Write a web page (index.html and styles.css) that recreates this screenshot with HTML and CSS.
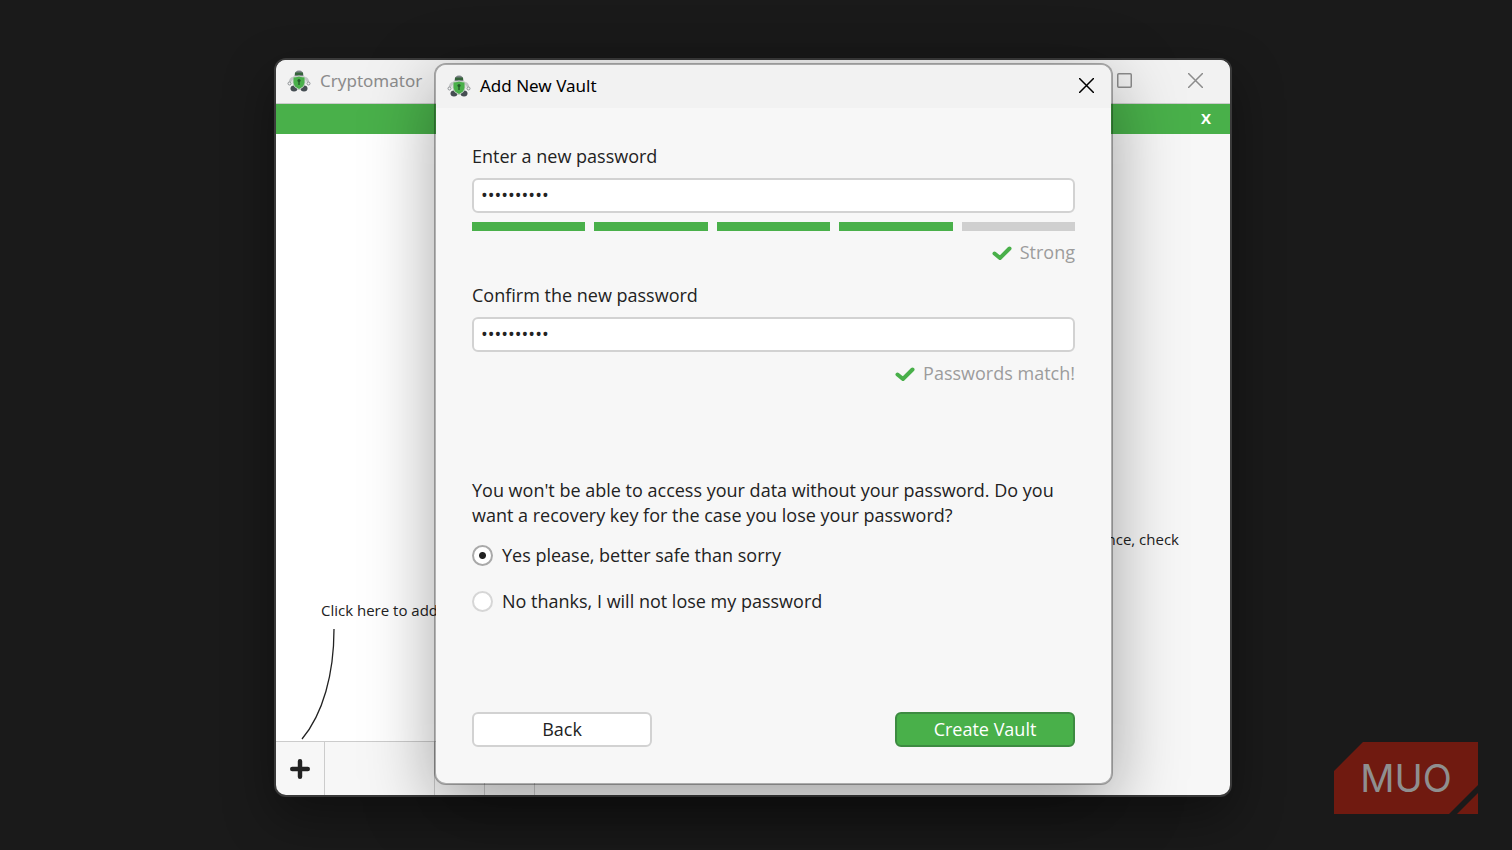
FILE: index.html
```html
<!DOCTYPE html>
<html lang="en">
<head>
    <meta charset="UTF-8">
    <meta name="viewport" content="width=device-width, initial-scale=1.0">
    <title>Cryptomator</title>
    <link rel="stylesheet" href="styles.css">
</head>
<body>
    <svg width="0" height="0" class="defs">
        <symbol id="robot" viewBox="0 0 24 22">
            <path d="M6 8 Q3.5 9 3 12 M18 8 Q20.500 9 21 12" fill="none" stroke="#c2c5c6" stroke-width="2.5"/>
            <circle cx="2.500" cy="13.500" r="1.500" fill="#f2f2f2" stroke="#8b9092" stroke-width="1"/>
            <circle cx="21.500" cy="13.500" r="1.500" fill="#f2f2f2" stroke="#8b9092" stroke-width="1"/>
            <ellipse cx="7" cy="18.500" rx="3.500" ry="3" fill="#464e53"/>
            <ellipse cx="17" cy="18.500" rx="3.500" ry="3" fill="#464e53"/>
            <path d="M7.500 6 Q7.500 0.500 12 0.500 Q16.500 0.500 16.500 6z" fill="#7a8285"/>
            <rect x="8" y="2.500" width="8" height="2.500" fill="#35633a"/>
            <path d="M6 7 Q9 7 12 6 Q15 7 18 7 V13 Q18 17 12 19.500 Q6 17 6 13z" fill="#49b04a" stroke="#c6cac8" stroke-width="1"/>
            <circle cx="12" cy="10.500" r="1.600" fill="#245a2a"/>
            <rect x="11.300" y="11" width="1.400" height="4" fill="#245a2a"/>
        </symbol>
        <symbol id="check" viewBox="0 0 20 14">
            <path d="M2.5 7.5 L8 12 L17.5 2.5" fill="none" stroke="#49b04a" stroke-width="4" stroke-linecap="round"/>
        </symbol>
        <symbol id="cross" viewBox="0 0 15 15">
            <path d="M0 0 L15 15 M15 0 L0 15" fill="none" stroke="currentColor" stroke-width="1.5"/>
        </symbol>
    </svg>

    <div class="window main">
        <div class="titlebar">
            <svg class="robot"><use href="#robot"/></svg>
            <span class="title">Cryptomator</span>
            <button class="winbtn" aria-label="Maximize">
                <svg viewBox="0 0 15 15"><rect x="0.75" y="0.75" width="13.5" height="13.5" rx="1" fill="none" stroke="currentColor" stroke-width="1.5"/></svg>
            </button>
            <button class="winbtn" aria-label="Close"><svg><use href="#cross"/></svg></button>
        </div>
        <div class="banner">
            <button aria-label="Dismiss">X</button>
        </div>
        <div class="content">
            <div class="sidebar">
                <div class="vaults">
                    <p>Click here to add</p>
                    <svg class="curve" viewBox="0 0 34 112">
                        <path d="M33 1 C33 46 22 86 1 111" fill="none" stroke="#222" stroke-width="1.3"/>
                    </svg>
                </div>
                <div class="toolbar">
                    <button class="add" aria-label="Add vault">
                        <svg viewBox="0 0 18 18"><path d="M9 2 V16 M2 9 H16" stroke="#222" stroke-width="4" stroke-linecap="round"/></svg>
                    </button>
                    <span class="cell"></span>
                    <span class="cell"></span>
                </div>
            </div>
            <div class="detail">
                <p>nce, check</p>
            </div>
        </div>
    </div>

    <div class="window dialog">
        <div class="titlebar">
            <svg class="robot"><use href="#robot"/></svg>
            <span class="title">Add New Vault</span>
            <button class="winbtn" aria-label="Close"><svg><use href="#cross"/></svg></button>
        </div>
        <form class="form">
            <label for="pass">Enter a new password</label>
            <input type="password" id="pass" value="cryptovaul">
            <div class="strength">
                <span class="on"></span>
                <span class="on"></span>
                <span class="on"></span>
                <span class="on"></span>
                <span></span>
            </div>
            <div class="status"><svg><use href="#check"/></svg>Strong</div>

            <label for="confirm" class="second">Confirm the new password</label>
            <input type="password" id="confirm" value="cryptovaul">
            <div class="status"><svg><use href="#check"/></svg>Passwords match!</div>

            <p class="question">You won't be able to access your data without your password. Do you want a recovery key for the case you lose your password?</p>
            <label class="choice"><input type="radio" name="recovery" checked>Yes please, better safe than sorry</label>
            <label class="choice"><input type="radio" name="recovery">No thanks, I will not lose my password</label>

            <div class="buttons">
                <button type="button">Back</button>
                <button type="button" class="primary">Create Vault</button>
            </div>
        </form>
    </div>

    <div class="logo">
        <svg viewBox="0 0 144 72">
            <path d="M0 29 L29 0 H144 V43 L115 72 H0z M144 51 V72 H123z" fill="#701a10"/>
        </svg>
        <span>MUO</span>
    </div>
</body>
</html>
```

FILE: styles.css
```css
*{
    box-sizing: border-box;
}
body{
    margin: 0;
    min-height: 100vh;
    background-color: #1a1a1a;
    color: #222;
    font-family: "Open Sans", "Noto Sans", sans-serif;
    font-size: 18px;
    line-height: 25px;
    overflow: hidden;
}
p{
    margin: 0;
}
button{
    font: inherit;
    color: inherit;
    padding: 0;
    border: none;
    background: none;
}
.defs{
    position: absolute;
}

/* windows */
.window{
    position: absolute;
    display: flex;
    flex-direction: column;
    border-radius: 12px;
    overflow: hidden;
    background-color: #f7f7f7;
}
.main{
    left: 274px;
    right: 280px;
    top: 58px;
    bottom: 53px;
    border: 2px solid #3a3a3a;
    box-shadow: 0 20px 50px rgba(0,0,0,0.4);
}
.dialog{
    left: 434px;
    right: 399px;
    top: 63px;
    border: 2px solid rgba(0,0,0,0.3);
    background-clip: padding-box;
    box-shadow: 0 20px 70px rgba(0,0,0,0.35);
}
.titlebar{
    display: flex;
    align-items: center;
    height: 43px;
    padding: 0 17px 2px 11px;
    background-color: #f2f2f2;
    color: #000;
}
.main .titlebar{
    height: 44px;
    padding-right: 27px;
    border-bottom: 1px solid #ccc;
    color: #8c8c8c;
}
.robot{
    width: 24px;
    height: 22px;
    margin-right: 9px;
}
.title{
    flex: 1;
    font-family: "Noto Sans", sans-serif;
    font-size: 17px;
}
.winbtn{
    display: flex;
    margin-left: 56px;
}
.winbtn svg{
    width: 15px;
    height: 15px;
}
.banner{
    display: flex;
    justify-content: flex-end;
    padding: 0 19px 2px;
    height: 30px;
    background-color: #49b04a;
    color: #fff;
    font-size: 15px;
    font-weight: bold;
}

/* main window */
.content{
    flex: 1;
    display: flex;
    font-size: 15px;
}
.sidebar{
    display: flex;
    flex-direction: column;
    width: 259px;
    border-right: 1px solid #ccc;
}
.vaults{
    flex: 1;
    display: flex;
    flex-direction: column;
    justify-content: flex-end;
    background-color: #fff;
}
.vaults p{
    padding-left: 45px;
}
.curve{
    width: 34px;
    height: 112px;
    margin: 5px 0 1px 25px;
}
.toolbar{
    display: flex;
    justify-content: flex-end;
    height: 54px;
    border-top: 1px solid #ccc;
}
.add{
    width: 49px;
    margin-right: auto;
    border-right: 1px solid #ccc;
}
.add svg{
    display: block;
    width: 20px;
    height: 20px;
    margin: auto;
}
.cell{
    width: 50px;
    border-left: 1px solid #ccc;
}
.detail{
    flex: 1;
    padding: 393px 51px 0 0;
    text-align: right;
}

/* dialog */
.form{
    display: flex;
    flex-direction: column;
    padding: 36px;
}
.form input[type=password]{
    height: 35px;
    margin: 9px 0;
    padding: 0 7px 2px;
    border: 2px solid #d2d2d2;
    border-radius: 6px;
    background-color: #fff;
    color: #222;
    font: inherit;
}
.strength{
    display: grid;
    grid-template-columns: repeat(5, 1fr);
    gap: 9px;
    margin-bottom: 9px;
}
.strength span{
    height: 9px;
    background-color: #cfcfcf;
}
.strength .on{
    background-color: #49b04a;
}
.status{
    display: flex;
    justify-content: flex-end;
    align-items: center;
    gap: 8px;
    color: #9c9c9c;
}
.status svg{
    width: 20px;
    height: 14px;
}
.second{
    margin-top: 18px;
}
.question{
    margin-top: 92px;
    margin-bottom: 15px;
}
.choice{
    display: flex;
    align-items: center;
    gap: 9px;
    margin-bottom: 21px;
}
.choice input{
    appearance: none;
    width: 21px;
    height: 21px;
    margin: 0;
    border: 2px solid #d6d6d6;
    border-radius: 50%;
    background-color: #fff;
}
.choice input:checked{
    border-color: #a9a9a9;
    background-image: radial-gradient(circle, #222 3px, transparent 4px);
}
.buttons{
    display: flex;
    justify-content: space-between;
    margin-top: 77px;
}
.buttons button{
    width: 180px;
    height: 35px;
    border: 2px solid #d2d2d2;
    border-radius: 6px;
    background-color: #fff;
}
.buttons .primary{
    border-color: #3d8b41;
    background-color: #49b04a;
    color: #fff;
}

.logo{
    position: absolute;
    right: 34px;
    bottom: 36px;
    width: 144px;
    height: 72px;
    display: grid;
    place-items: center;
}
.logo svg, .logo span{
    grid-area: 1 / 1;
}
.logo span{
    color: #8f8f8f;
    font-family: Inter, sans-serif;
    font-size: 38px;
    font-weight: 400;
}
```
